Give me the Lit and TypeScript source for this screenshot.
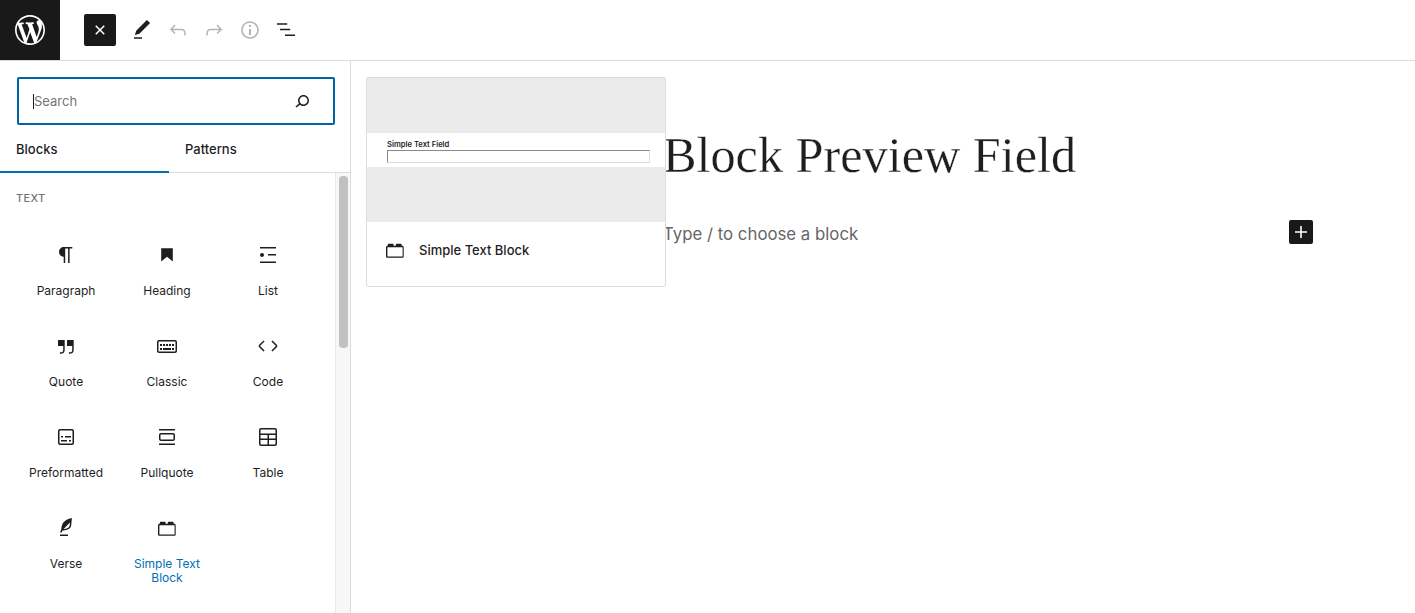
import { LitElement, html, css, svg } from "lit";
import { customElement } from "lit/decorators.js";

const P: Record<string, string> = {
  close: "M12 13.06l3.712 3.713 1.061-1.06L13.061 12l3.712-3.712-1.06-1.06L12 10.938 8.288 7.227l-1.061 1.06L10.939 12l-3.712 3.712 1.06 1.061L12 13.061z",
  edit: "M20.1 5.1L16.9 2 6.2 12.7l-1.3 4.4 4.5-1.3L20.1 5.1zM4 20.8h8v-1.5H4v1.5z",
  undo: "M18.3 11.7c-.6-.6-1.4-.9-2.3-.9H6.7l2.9-3.3-1.1-1-4.5 5L8.5 16l1-1-2.7-2.7H16c.5 0 .9.2 1.3.5 1 1 1 3.4 1 4.5v.3h1.5v-.2c0-1.5 0-4.3-1.5-5.7z",
  redo: "M15.6 6.5l-1.1 1 2.9 3.3H8c-.9 0-1.7.3-2.3.9-1.4 1.5-1.4 4.2-1.4 5.6v.2h1.5v-.3c0-1.1 0-3.5 1-4.5.3-.3.7-.5 1.3-.5h9.2L14.5 15l1.1 1.1 4.6-4.6-4.6-5z",
  info: "M12 3.2c-4.8 0-8.8 3.9-8.8 8.8 0 4.8 3.9 8.8 8.8 8.8 4.8 0 8.8-3.9 8.8-8.8 0-4.8-4-8.8-8.8-8.8zm0 16c-4 0-7.2-3.3-7.2-7.2C4.8 8 8 4.8 12 4.8s7.2 3.3 7.2 7.2c0 4-3.2 7.2-7.2 7.2zM11 17h2v-6h-2v6zm0-8h2V7h-2v2z",
  listview: "M3 5.2h10.2v1.5H3zM6 10.7h10.2v1.5H6zM11 16.5h10V18H11z",
  search: "M13.5 6C10.5 6 8 8.5 8 11.5c0 1.1.3 2.1.9 3l-3.4 3 1 1.1 3.4-2.9c1 .9 2.2 1.4 3.6 1.4 3 0 5.5-2.5 5.5-5.5C19 8.5 16.5 6 13.5 6zm0 9.5c-2.2 0-4-1.8-4-4s1.8-4 4-4 4 1.8 4 4-1.8 4-4 4z",
  paragraph: "M18.3 4H9.9v-.1l-.9.2c-2.3.4-4 2.4-4 4.8s1.7 4.4 4 4.8l.7.1V20h1.5V5.5h2.9V20h1.5V5.5h2.7V4z",
  heading: "M6.2 5.2v13.4l5.8-4.8 5.8 4.8V5.2z",
  list: "M4 4v1.5h16V4H4zm8 8.5h8V11h-8v1.5zM4 20h16v-1.5H4V20zm4-8c0-1.1-.9-2-2-2s-2 .9-2 2 .9 2 2 2 2-.9 2-2z",
  quote: "M13 6v6h5.2v4c0 .8-.2 1.4-.5 1.7-.6.6-1.6.6-2.5.5h-.3v1.5h.5c1 0 2.3-.1 3.3-1 .6-.6 1-1.6 1-2.8V6H13zm-9 6h5.2v4c0 .8-.2 1.4-.5 1.7-.6.6-1.6.6-2.5.5h-.3v1.5h.5c1 0 2.3-.1 3.3-1 .6-.6 1-1.6 1-2.8V6H4v6z",
  classic: "M20 6H4c-1.1 0-2 .9-2 2v9c0 1.1.9 2 2 2h16c1.1 0 2-.9 2-2V8c0-1.1-.9-2-2-2zm.5 11c0 .3-.2.5-.5.5H4c-.3 0-.5-.2-.5-.5V8c0-.3.2-.5.5-.5h16c.3 0 .5.2.5.5v9zM10 10H8v2h2v-2zm-5 2h2v-2H5v2zm8-2h-2v2h2v-2zm-5 6h8v-2H8v2zm6-4h2v-2h-2v2zm3 0h2v-2h-2v2zm0 4h2v-2h-2v2zM5 16h2v-2H5v2z",
  code: "M20.8 10.7l-4.3-4.3-1.1 1.1 4.3 4.3c.1.1.1.3 0 .4l-4.3 4.3 1.1 1.1 4.3-4.3c.7-.8.7-1.9 0-2.6zM4.2 11.8l4.3-4.3-1-1-4.3 4.3c-.7.7-.7 1.8 0 2.5l4.3 4.3 1.1-1.1-4.3-4.3c-.2-.1-.2-.3-.1-.4z",
  preformatted: "M18 4H6c-1.1 0-2 .9-2 2v12c0 1.1.9 2 2 2h12c1.1 0 2-.9 2-2V6c0-1.1-.9-2-2-2zm.5 14c0 .3-.2.5-.5.5H6c-.3 0-.5-.2-.5-.5V6c0-.3.2-.5.5-.5h12c.3 0 .5.2.5.5v12zM7 16.5h6V15H7v1.5zm4-4h6V11h-6v1.5zM9 11H7v1.5h2V11zm6 5.5h2V15h-2v1.5z",
  pullquote: "M18 8H6c-1.1 0-2 .9-2 2v4c0 1.1.9 2 2 2h12c1.1 0 2-.9 2-2v-4c0-1.1-.9-2-2-2zm.5 6c0 .3-.2.5-.5.5H6c-.3 0-.5-.2-.5-.5v-4c0-.3.2-.5.5-.5h12c.3 0 .5.2.5.5v4zM4 4v1.5h16V4H4zm0 16h16v-1.5H4V20z",
  table: "M19 3H5c-1.1 0-2 .9-2 2v14c0 1.1.9 2 2 2h14c1.1 0 2-.9 2-2V5c0-1.1-.9-2-2-2zM5 4.5h14c.3 0 .5.2.5.5v3.5h-15V5c0-.3.2-.5.5-.5zm8 5.5h6.5v3.5H13V10zm-1.5 3.5h-7V10h7v3.5zm-7 5.5v-4h7v4.5H5c-.3 0-.5-.2-.5-.5zm14.5.5h-6V15h6.5v4c0 .3-.2.5-.5.5z",
  verse: "M17.8 2l-.9.3c-.1 0-3.6 1-5.2 2.1C10 5.5 9.3 6.5 8.9 7.1c-.6.9-1.7 4.7-1.7 6.3l-.9 2.3c-.2.4 0 .8.4 1 .1 0 .2.1.3.1.3 0 .6-.2.7-.5l.6-1.5c.3 0 .7-.1 1.2-.2.7-.1 1.4-.3 2.2-.5.8-.2 1.6-.5 2.4-.8.7-.3 1.4-.7 1.9-1.2s.8-1.2 1-1.9c.2-.7.3-1.6.4-2.4.1-.8.1-1.7.2-2.5 0-.8.1-1.5.2-2.1V2zm-1.9 5.6c-.1.8-.2 1.5-.3 2.1-.2.6-.4 1-.6 1.3-.3.3-.8.6-1.4.9-.7.3-1.4.5-2.2.8-.6.2-1.3.3-1.8.4L15 7.5c.3-.3.6-.7 1-1.1 0 .4 0 .8-.1 1.2zM6 20h8v-1.5H6V20z",
  lego: "M4.8 7.8V6.6c0-.5.3-.8.8-.8h4.2c.5 0 .8.3.8.8v1.2h2.2V6.6c0-.5.3-.8.8-.8h4.2c.5 0 .8.3.8.8v1.2h.7c.9 0 1.4.7 1.4 1.6v8.8c0 .9-.5 1.6-1.4 1.6H4.6c-.9 0-1.6-.7-1.6-1.6V9.4c0-.9.7-1.6 1.6-1.6zM4.6 9.2c-.1 0-.2.1-.2.2v8.8c0 .1.1.2.2.2h14.8c.1 0 .2-.1.2-.2V9.4c0-.1-.1-.2-.2-.2H4.6z",
  plus: "M18 11.2h-5.2V6h-1.6v5.2H6v1.6h5.2V18h1.6v-5.2H18z",
};
const WP = "M20 10c0-5.51-4.49-10-10-10C4.48 0 0 4.49 0 10c0 5.52 4.48 10 10 10 5.51 0 10-4.48 10-10zM7.78 15.37L4.37 6.22c.55-.02 1.17-.08 1.17-.08.5-.06.44-1.13-.06-1.11 0 0-1.45.11-2.37.11-.18 0-.37 0-.58-.01C4.12 2.69 6.87 1.11 10 1.11c2.33 0 4.45.87 6.05 2.34-.68-.11-1.65.39-1.65 1.58 0 .74.45 1.36.9 2.1.35.61.55 1.36.55 2.46 0 1.49-1.4 5-1.4 5l-3.03-8.37c.54-.02.82-.17.82-.17.5-.05.44-1.25-.06-1.22 0 0-1.44.12-2.38.12-.87 0-2.33-.12-2.33-.12-.5-.03-.56 1.2-.06 1.22l.92.08 1.26 3.41zM17.41 10c.24-.64.74-1.87.43-4.25.7 1.29 1.05 2.71 1.05 4.25 0 3.29-1.73 6.24-4.4 7.78.97-2.59 1.94-5.2 2.92-7.78zM6.1 18.09C3.12 16.65 1.11 13.53 1.11 10c0-1.3.23-2.48.72-3.59C3.25 10.3 4.67 14.2 6.1 18.09zm4.03-6.63l2.58 6.98c-.86.29-1.76.45-2.71.45-.79 0-1.57-.11-2.29-.33.81-2.38 1.62-4.74 2.42-7.1z";

const icon = (n: string) => html`<svg class="ic" viewBox="0 0 24 24" width="24" height="24">${svg`<path d=${P[n]}></path>`}</svg>`;

const BLOCKS: [string, string][] = [
  ["paragraph", "Paragraph"], ["heading", "Heading"], ["list", "List"],
  ["quote", "Quote"], ["classic", "Classic"], ["code", "Code"],
  ["preformatted", "Preformatted"], ["pullquote", "Pullquote"], ["table", "Table"],
  ["verse", "Verse"], ["lego", "Simple Text Block"],
];

@customElement("app-root")
export class AppRoot extends LitElement {
  static styles = css`
    :host { display: block; height: 613px; overflow: hidden; position: relative; background: #fff; color: #1e1e1e; font-family: Inter, "Liberation Sans", sans-serif; }
    * { box-sizing: border-box; }
    .ic { display: block; fill: currentColor; flex: none; }
    header { display: flex; align-items: center; height: 61px; border-bottom: 1px solid #dcdcdc; }
    .logo { width: 60px; height: 60px; background: #191919; display: flex; align-items: center; justify-content: center; color: #fff; }
    .logo svg { width: 30px; height: 30px; fill: currentColor; display: block; }
    .tools { display: flex; align-items: center; margin-left: 24px; }
    .tool { width: 36px; height: 32px; display: flex; align-items: center; justify-content: center; color: #1e1e1e; }
    .tool.off { color: #b4b4b4; }
    .tool.on { width: 32px; margin-right: 8px; background: #191919; color: #fff; border-radius: 2px; }
    .body { display: flex; height: 552px; }
    aside { width: 351px; border-right: 1px solid #dcdcdc; display: flex; flex-direction: column; flex: none; }
    .search { margin: 16px 15px 0 17px; height: 48px; border: 2px solid #00669f; border-radius: 2px; display: flex; align-items: center; padding: 0 19px 0 14px; justify-content: space-between; }
    .ph { font-size: 13px; color: #757575; border-left: 1px solid #1e1e1e; height: 15px; line-height: 15px; }
    .tabs { display: flex; height: 48px; border-bottom: 1px solid #dcdcdc; }
    .tab { width: 169px; padding-left: 16px; display: flex; align-items: center; font-size: 13px; font-weight: 500; height: 48px; }
    .tab.active { box-shadow: inset 0 -2px 0 #0070a8; }
    .panel { flex: 1; display: flex; min-height: 0; }
    .list { flex: 1; padding: 18px 16px 0 15.5px; }
    .title { font-size: 11px; font-weight: 500; color: #757575; text-transform: uppercase; letter-spacing: .3px; line-height: 14px; margin-left: .5px; }
    .grid { display: grid; grid-template-columns: repeat(3, 101px); grid-auto-rows: 91px; margin-top: 34px; }
    .item { display: flex; flex-direction: column; align-items: center; padding-top: 4px; font-size: 12px; line-height: 14px; text-align: center; }
    .item span { margin-top: 17px; width: 80px; }
    .item.sel span { color: #0070b0; }
    .gutter { width: 15px; flex: none; background: #f7f7f7; border-left: 1px solid #e8e8e8; padding: 3px 2px 0 3px; }
    .thumb { height: 172px; background: #c1c1c1; border-radius: 4px; }
    main { flex: 1; position: relative; padding: 68px 102px 0 313px; }
    h1 { font: 400 50.25px/52px "Liberation Serif", serif; margin: 0 0 0 -1px; color: #1e1e1e; white-space: nowrap; -webkit-text-stroke: 0.3px #fff; }
    .append { display: flex; justify-content: space-between; margin-top: 39px; height: 24px; }
    .hint { font-size: 16.8px; line-height: 24px; margin-top: 2px; color: #666; margin-left: -1px; }
    .plus { width: 24px; height: 24px; background: #191919; color: #fff; border-radius: 2px; }
    .card { position: absolute; left: 15px; top: 16px; width: 300px; height: 210px; border: 1px solid #ddd; border-radius: 2px; background: #fff; display: flex; flex-direction: column; }
    .preview { height: 144px; background: #ebebeb; display: flex; align-items: center; flex: none; }
    .band { width: 100%; height: 34px; background: #fff; padding: 8px 15px 0 20px; }
    .flabel { font-size: 7.6px; font-weight: 600; line-height: 8px; color: #1e1e1e; }
    .finput { height: 13px; margin-top: 1px; border: 1px solid #dedede; border-top-color: #8a8a8a; border-left-color: #8a8a8a; }
    .cinfo { flex: 1; display: flex; align-items: center; gap: 12px; padding: 0 16px 8px; font-size: 13px; font-weight: 500; }
  `;

  render() {
    return html`
      <header>
        <div class="logo"><svg viewBox="0 0 20 20"><path d=${WP}></path></svg></div>
        <div class="tools">
          <div class="tool on">${icon("close")}</div>
          <div class="tool">${icon("edit")}</div>
          <div class="tool off">${icon("undo")}</div>
          <div class="tool off">${icon("redo")}</div>
          <div class="tool off">${icon("info")}</div>
          <div class="tool">${icon("listview")}</div>
        </div>
      </header>
      <div class="body">
        <aside>
          <div class="search"><div class="ph">Search</div>${icon("search")}</div>
          <div class="tabs">
            <div class="tab active">Blocks</div>
            <div class="tab">Patterns</div>
          </div>
          <div class="panel">
            <div class="list">
              <div class="title">Text</div>
              <div class="grid">
                ${BLOCKS.map(([i, l]) => html`<div class="item ${i === "lego" ? "sel" : ""}">${icon(i)}<span>${l}</span></div>`)}
              </div>
            </div>
            <div class="gutter"><div class="thumb"></div></div>
          </div>
        </aside>
        <main>
          <h1>Block Preview Field</h1>
          <div class="append"><div class="hint">Type / to choose a block</div><div class="plus">${icon("plus")}</div></div>
          <div class="card">
            <div class="preview"><div class="band"><div class="flabel">Simple Text Field</div><div class="finput"></div></div></div>
            <div class="cinfo">${icon("lego")}<span>Simple Text Block</span></div>
          </div>
        </main>
      </div>
    `;
  }
}
